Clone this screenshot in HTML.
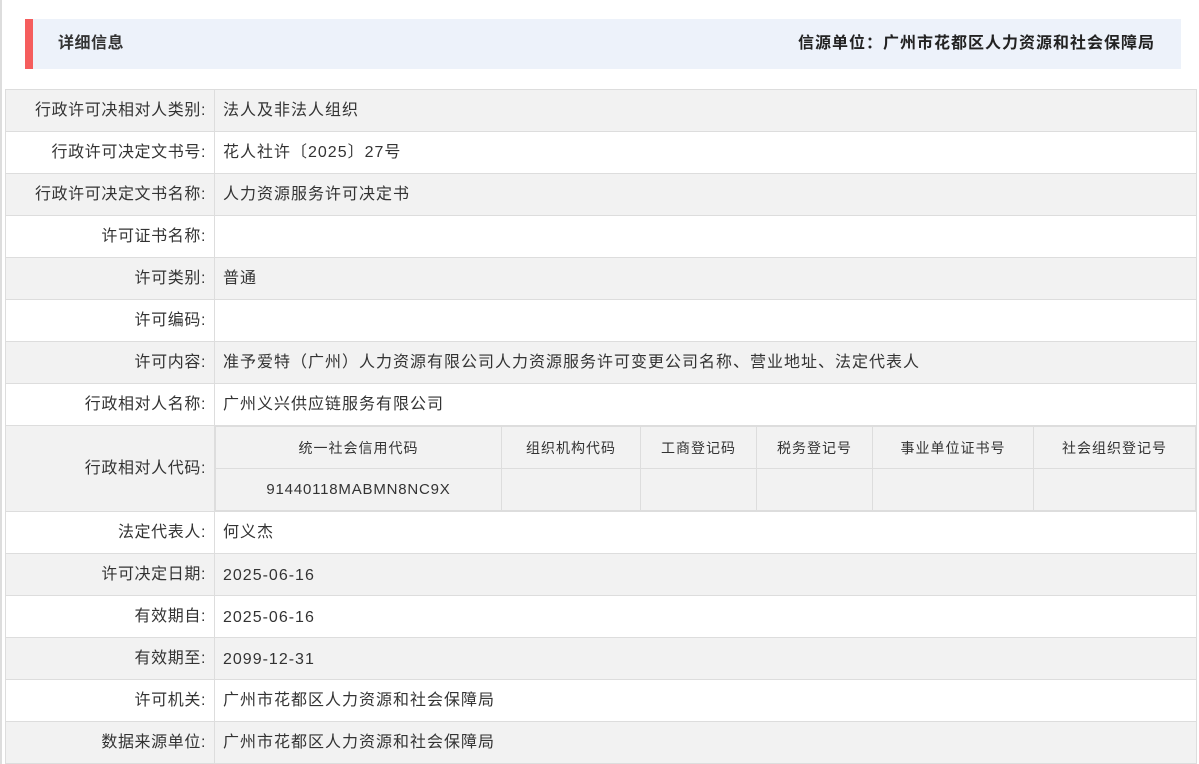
<!DOCTYPE html>
<html><head><meta charset="utf-8"><style>
body{margin:0;background:#fff;font-family:"Liberation Sans","Noto Sans CJK SC",sans-serif;color:#333;font-size:16px;letter-spacing:1px}
.lb{position:absolute;left:0;top:0;width:2px;height:764px;background:#ddd}
.hd{position:absolute;left:25px;top:19px;width:1156px;height:50px;background:#edf2fa;}
.hd .bar{position:absolute;left:0;top:0;width:8px;height:50px;background:#f55d5d}
.hd .t{position:absolute;left:33px;top:0;line-height:50px;font-weight:bold;color:#333;font-size:16px;letter-spacing:0.5px}
.hd .r{position:absolute;right:26px;top:0;line-height:50px;font-weight:bold;color:#222;font-size:16px;letter-spacing:1px}
table.m{position:absolute;left:5px;top:89px;width:1192px;border-collapse:collapse;}
table.m td{border:1px solid #ddd;height:41px;padding:0;line-height:20px}
table.m td.l{width:200px;text-align:right;padding-right:8px;letter-spacing:0.6px}
table.m td.v{padding-left:8px;}
table.m td.n{padding-left:8px;padding-top:3px;height:38px}
table.m tr:nth-child(odd){background:#f2f2f2}
table.i{width:100%;border-collapse:collapse;font-size:14px;letter-spacing:1px}
table.i td{border:1px solid #ddd;height:41px;text-align:center;padding:0}
</style></head><body>
<div class="lb"></div>
<div class="hd"><div class="bar"></div><div class="t">详细信息</div><div class="r">信源单位：广州市花都区人力资源和社会保障局</div></div>
<table class="m">
<tr><td class="l">行政许可决相对人类别:</td><td class="v">法人及非法人组织</td></tr>
<tr><td class="l">行政许可决定文书号:</td><td class="v">花人社许〔2025〕27号</td></tr>
<tr><td class="l">行政许可决定文书名称:</td><td class="v">人力资源服务许可决定书</td></tr>
<tr><td class="l">许可证书名称:</td><td class="v"></td></tr>
<tr><td class="l">许可类别:</td><td class="v">普通</td></tr>
<tr><td class="l">许可编码:</td><td class="v"></td></tr>
<tr><td class="l">许可内容:</td><td class="v">准予爱特（广州）人力资源有限公司人力资源服务许可变更公司名称、营业地址、法定代表人</td></tr>
<tr><td class="l">行政相对人名称:</td><td class="v">广州义兴供应链服务有限公司</td></tr>
<tr><td class="l" style="height:85px">行政相对人代码:</td><td style="padding:0;vertical-align:top">
<table class="i"><tr><td style="width:285px">统一社会信用代码</td><td style="width:138px">组织机构代码</td><td style="width:115px">工商登记码</td><td style="width:115px">税务登记号</td><td style="width:160px">事业单位证书号</td><td>社会组织登记号</td></tr>
<tr><td style="font-size:15px;letter-spacing:0.8px">91440118MABMN8NC9X</td><td></td><td></td><td></td><td></td><td></td></tr></table></td></tr>
<tr><td class="l">法定代表人:</td><td class="v">何义杰</td></tr>
<tr><td class="l">许可决定日期:</td><td class="n">2025-06-16</td></tr>
<tr><td class="l">有效期自:</td><td class="n">2025-06-16</td></tr>
<tr><td class="l">有效期至:</td><td class="n">2099-12-31</td></tr>
<tr><td class="l">许可机关:</td><td class="v">广州市花都区人力资源和社会保障局</td></tr>
<tr><td class="l">数据来源单位:</td><td class="v">广州市花都区人力资源和社会保障局</td></tr>
</table>
</body></html>
